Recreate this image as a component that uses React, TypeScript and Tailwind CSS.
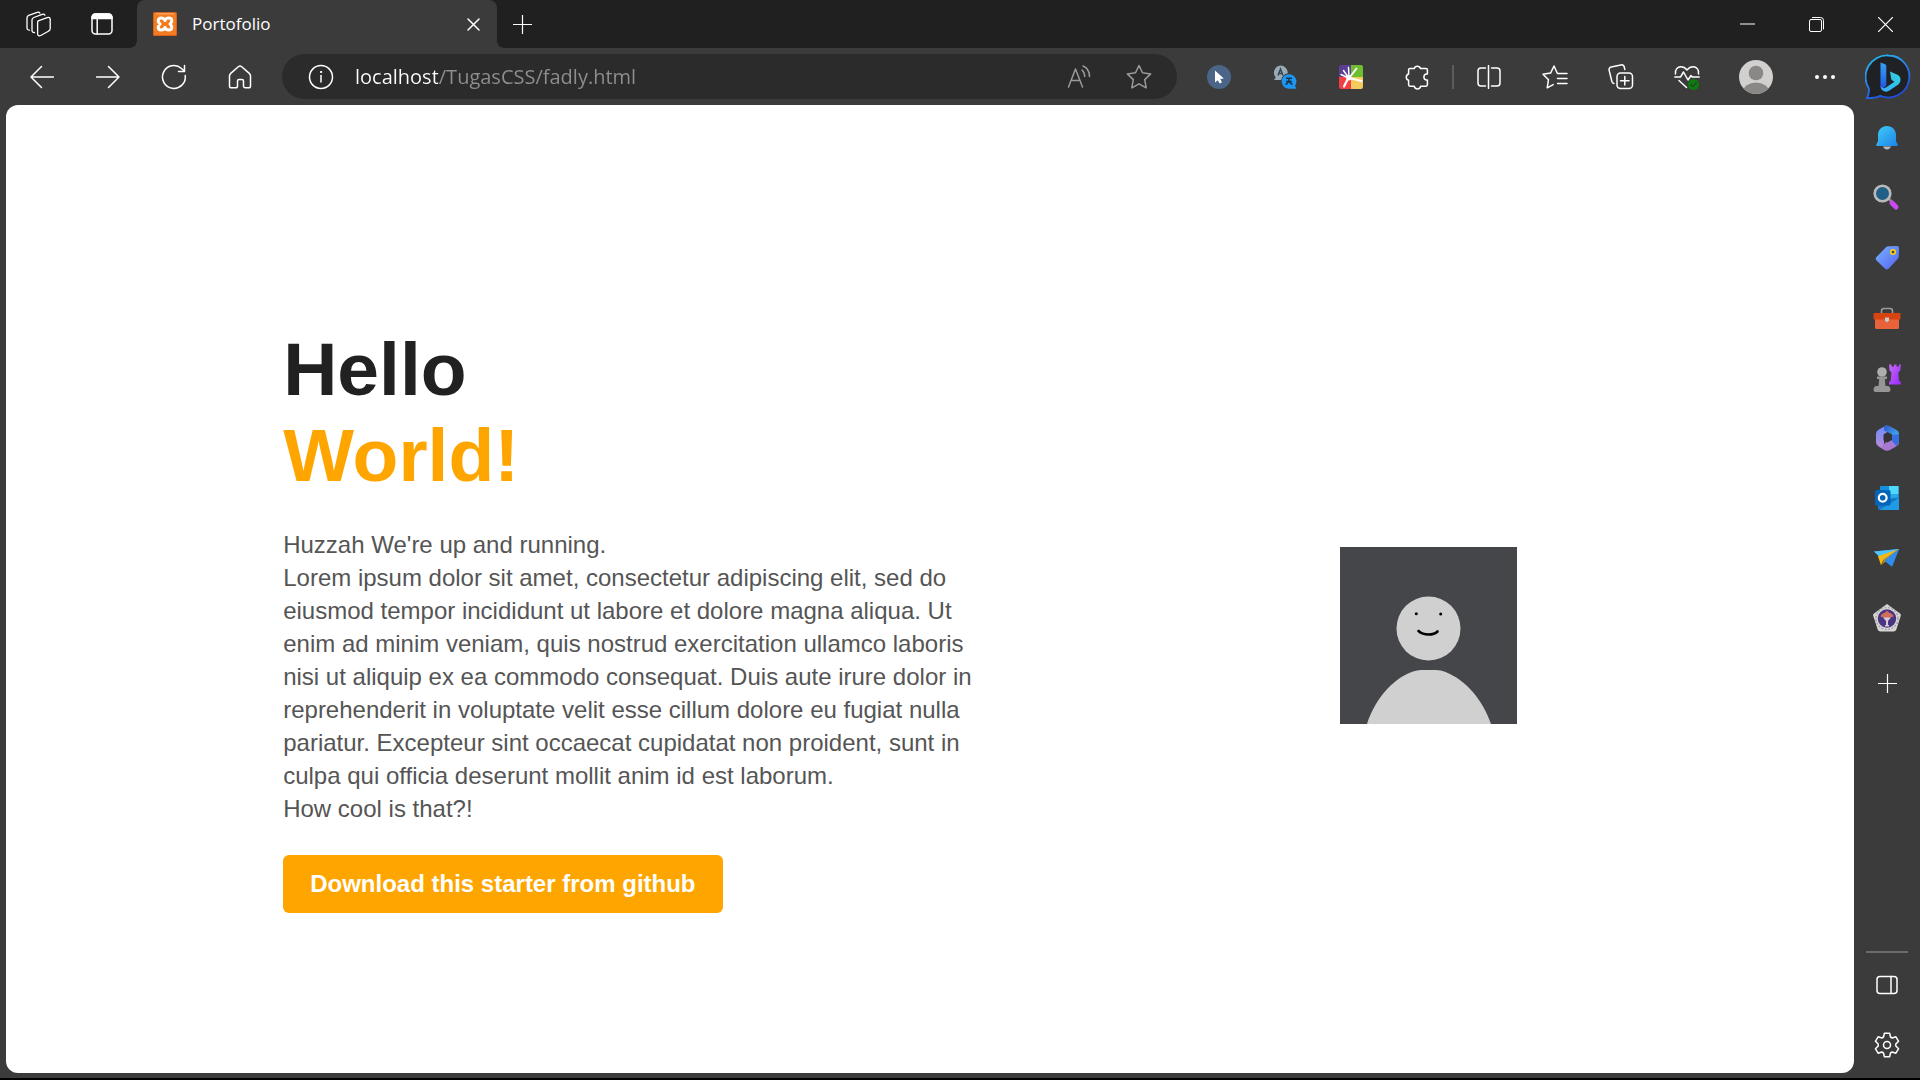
import type { ReactNode } from "react";

const line = {
  fill: "none",
  stroke: "currentColor",
  strokeWidth: 1.5,
  strokeLinecap: "round",
  strokeLinejoin: "round",
} as const;

function IconButton({ label, className, children }: { label: string; className: string; children: ReactNode }) {
  return (
    <button type="button" aria-label={label} className={`flex shrink-0 items-center justify-center ${className}`}>
      {children}
    </button>
  );
}

function Plus() {
  return (
    <svg width="20" height="20" viewBox="0 0 20 20" {...line} strokeWidth={1.2} strokeLinecap="butt">
      <path d="M10.500 1v19M1 10.500h19" />
    </svg>
  );
}

function TitleBar() {
  return (
    <header className="flex h-12 shrink-0 bg-[#202020] text-white">
      <div className="flex pr-1 pl-[7px]">
        <IconButton label="Workspaces" className="w-[63px]">
          <svg width="26" height="26" viewBox="0 0 26 26" {...line} strokeWidth={1.3}>
            <path d="M12.200 9.800l9-3.200c1.800-.6 3 .2 3 1.700v9.200c0 1.300-.6 2.100-1.800 2.700l-7.700 4.300c-1.500.8-3.100.1-3.100-1.500V12c0-1.100.2-1.800.6-2.200z" />
            <path d="M8.500 21.500c-1.500.2-2.500-.6-2.500-2V9c0-1.200.6-2 1.800-2.500l8.400-3.200c1.200-.4 2.200-.1 2.700.8" />
            <path d="M3.500 19.200C2 19.200 1 18.400 1 17V6.900C1 5.700 1.600 4.900 2.700 4.400l8.500-3.100c1.100-.4 2.100-.1 2.600.8" />
          </svg>
        </IconButton>
        <IconButton label="Tab actions menu" className="w-[63px]">
          <svg width="22" height="22" viewBox="0 0 22 22" {...line}>
            <rect x="1" y="1" width="20" height="20" rx="3.500" />
            <path d="M1 5.500v-1A3.500 3.500 0 0 1 4.500 1h13A3.500 3.500 0 0 1 21 4.500v1z" fill="currentColor" />
            <path d="M6.200 6v15" />
          </svg>
        </IconButton>
      </div>
      <div className="relative flex w-[360px] items-center rounded-t-lg bg-[#3b3b3b] pr-3 pl-4">
        <span className="absolute bottom-0 -left-1.5 size-1.5 bg-[radial-gradient(circle_at_0_0,#202020_5px,#3b3b3b_6px)]" />
        <span className="absolute -right-1.5 bottom-0 size-1.5 bg-[radial-gradient(circle_at_100%_0,#202020_5px,#3b3b3b_6px)]" />
        <svg width="24" height="24" viewBox="0 0 24 24">
          <rect width="24" height="24" rx="1.500" fill="#d9621a" />
          <rect x="1" y="1" width="22" height="22" rx="1" fill="#f47c20" />
          <path d="M3 1.800h18" stroke="#f9b27c" strokeWidth="1" />
          <path
            d="M12 8.500C11 5.300 5.200 5 5.200 8.800c0 1.700 1 2.500 1.800 3.200-.8.700-1.800 1.500-1.800 3.200 0 3.800 5.800 3.500 6.800.3 1 3.200 6.800 3.500 6.800-.3 0-1.700-1-2.500-1.800-3.200.8-.7 1.800-1.500 1.800-3.200C18.800 5 13 5.300 12 8.500z"
            fill="none"
            stroke="#fff"
            strokeWidth="3"
            strokeLinejoin="round"
          />
        </svg>
        <h2 className="min-w-0 flex-1 truncate pl-[15px] text-[17px] leading-6">Portofolio</h2>
        <IconButton label="Close tab" className="size-6">
          <svg width="13" height="13" viewBox="0 0 13 13" {...line}>
            <path d="M1 1l11 11M12 1L1 12" />
          </svg>
        </IconButton>
      </div>
      <IconButton label="New tab" className="w-[50px]">
        <Plus />
      </IconButton>
      <div className="ml-auto flex">
        <IconButton label="Minimize" className="w-[69px]">
          <svg width="15" height="15" viewBox="0 0 15 15" {...line} strokeWidth={1} strokeLinecap="butt">
            <path d="M0 7h15" />
          </svg>
        </IconButton>
        <IconButton label="Restore" className="w-[69px]">
          <svg width="15" height="15" viewBox="0 0 15 15" {...line} strokeWidth={1}>
            <rect x=".5" y="2.500" width="12" height="12" rx="1.500" />
            <path d="M3.500.5h8a3 3 0 0 1 3 3v8.500" />
          </svg>
        </IconButton>
        <IconButton label="Close window" className="w-[69px]">
          <svg width="15" height="15" viewBox="0 0 15 15" {...line} strokeWidth={1.2} strokeLinecap="butt">
            <path d="M0 0l15 15M15 0L0 15" />
          </svg>
        </IconButton>
      </div>
    </header>
  );
}

function Toolbar() {
  return (
    <nav aria-label="Browser toolbar" className="flex h-[57px] shrink-0 pr-0.5 pl-[9px] text-white">
      <IconButton label="Back" className="w-[66px]">
        <svg width="24" height="24" viewBox="0 0 24 24" {...line}>
          <path d="M11.500 1.500L1 12l10.500 10.500M1 12h22.500" />
        </svg>
      </IconButton>
      <IconButton label="Forward" className="w-[66px]">
        <svg width="24" height="24" viewBox="0 0 24 24" {...line}>
          <path d="M12.500 1.500L23 12 12.500 22.500M23 12H.5" />
        </svg>
      </IconButton>
      <IconButton label="Refresh" className="w-[66px]">
        <svg width="26" height="26" viewBox="0 0 26 26" {...line}>
          <path d="M24.200 11.500A11.400 11.400 0 1 1 20.500 4.500l2.700 2.500M23.500 1.500v6h-6" />
        </svg>
      </IconButton>
      <IconButton label="Home" className="w-[66px]">
        <svg width="24" height="26" viewBox="0 0 24 26" {...line}>
          <path d="M1.500 12c0-1 .4-1.900 1.200-2.600l7.600-6.700c1-.9 2.400-.9 3.400 0l7.600 6.700c.8.7 1.200 1.600 1.200 2.600v10c0 1-.7 1.800-1.800 1.800h-3.400c-1 0-1.800-.7-1.800-1.800v-5c0-1-.6-1.600-1.600-1.600h-2.800c-1 0-1.600.6-1.600 1.600v5c0 1-.8 1.800-1.800 1.800H3.300c-1.100 0-1.800-.8-1.800-1.800z" />
        </svg>
      </IconButton>

      <div className="mx-[9px] my-1.5 flex min-w-0 flex-1 items-center rounded-full bg-[#2b2b2b] pr-2 pl-[15px]">
        <IconButton label="View site information" className="w-12">
          <svg width="26" height="26" viewBox="0 0 26 26" {...line}>
            <circle cx="13" cy="13" r="11.500" />
            <path d="M13 11.500v6.500" />
            <circle cx="13" cy="8" r=".7" fill="currentColor" strokeWidth="1" />
          </svg>
        </IconButton>
        <input
          aria-label="Address"
          type="text"
          defaultValue="localhost/TugasCSS/fadly.html"
          className="ml-2.5 h-8 min-w-0 flex-1 bg-[linear-gradient(90deg,#fff_83px,#8f8f8f_83px)] bg-clip-text text-xl text-transparent outline-none"
        />
        <div className="flex text-[#9a9a9a]">
          <IconButton label="Read aloud" className="w-[60px]">
            <svg width="24" height="24" viewBox="0 0 24 24" {...line}>
              <path d="M1.500 22L8.500 4l7 18M4 15.500h9" />
              <path d="M15 5c1.700 1.500 2.700 3.700 2.700 6.500M16 1c4.200 1.700 6.500 5.500 6.500 10.500" />
            </svg>
          </IconButton>
          <IconButton label="Add to favorites" className="w-[60px]">
            <svg width="26" height="26" viewBox="0 0 26 26" {...line}>
              <path d="M13 1.500l3.500 7.300 8.200 1.100-6 5.700 1.500 8.200-7.200-4-7.200 4 1.500-8.200-6-5.700 8.200-1.100z" />
            </svg>
          </IconButton>
        </div>
      </div>

      <IconButton label="Pointer extension" className="w-[66px]">
        <svg width="24" height="24" viewBox="0 0 24 24">
          <circle cx="12" cy="12" r="12" fill="#4a6588" />
          <path d="M8 5.500v12l2.700-2.300 2 3.300 2.300-1.300-1.800-3.300 3.600-.5z" fill="#fff" />
        </svg>
      </IconButton>
      <IconButton label="Translate extension" className="w-[66px]">
        <svg width="24" height="24" viewBox="0 0 24 24">
          <path d="M7.500.5a7.300 7.300 0 1 1 0 14.600H1l1.700-2.600A7.300 7.300 0 0 1 7.500.5z" fill="#9aabb8" />
          <path d="M5 10.500l2.500-6.500L10 10.500M6 8.500h3" stroke="#34444f" strokeWidth="1.500" fill="none" />
          <circle cx="16" cy="16.500" r="8.200" fill="#3b3b3b" />
          <path d="M16 9.200a7.300 7.300 0 0 1 6 11.500l1.500 3.100H16a7.300 7.300 0 0 1 0-14.600z" fill="#1c96f3" />
          <path d="M13 13.200h6M12.500 19.500c2.500-1 3.500-3 3.500-6M19.500 19.500c-2.500-1-3.500-3-3.500-6M13 16.500h6" stroke="#17364f" strokeWidth="1.400" fill="none" />
        </svg>
      </IconButton>
      <IconButton label="Media extension" className="w-[66px]">
        <svg width="24" height="24" viewBox="0 0 24 24">
          <path d="M2 0h10v12H0V2a2 2 0 0 1 2-2z" fill="#5b3f93" />
          <path d="M12 0h10a2 2 0 0 1 2 2v10H12z" fill="#6fbe30" />
          <path d="M0 12h12v12H2a2 2 0 0 1-2-2z" fill="#f23f43" />
          <path d="M12 12h12v10a2 2 0 0 1-2 2H12z" fill="#f2cb5c" />
          <g fill="none" stroke="#fff" strokeLinecap="round">
            <path d="M9.500 13L2 9.500M9.500 12.500L4.500 5.500M10 12L9.500 2.500" strokeWidth="1.500" />
            <path d="M10.500 12.500L17.500 3.500M10.500 13l12 3" strokeWidth="1.900" />
            <path d="M9 13.500L5 21.500" strokeWidth="2.200" />
          </g>
          <circle cx="9.800" cy="12.800" r="2.600" fill="#fff" />
        </svg>
      </IconButton>
      <IconButton label="Extensions" className="w-[66px]">
        <svg width="24" height="26" viewBox="0 0 24 26" {...line}>
          <path d="M5 4.500h4.200a3.300 3.300 0 0 1 6.300 0H21c.8 0 1.400.6 1.400 1.400V10h-1.200a3.100 3.100 0 0 0 0 6h1.200v4.800c0 .8-.6 1.400-1.400 1.400h-5.300a3.300 3.300 0 0 1-6.500 0H5c-.8 0-1.400-.6-1.400-1.400V16.300a3.300 3.300 0 0 1 0-6.300V5.900c0-.8.6-1.400 1.400-1.400z" />
        </svg>
      </IconButton>
      <div className="mx-0.5 h-6 w-0.5 self-center bg-[#5c5c5c]" />
      <IconButton label="Split screen" className="w-[66px]">
        <svg width="24" height="24" viewBox="0 0 24 24" {...line}>
          <path d="M8.500 21H4a3 3 0 0 1-3-3V6a3 3 0 0 1 3-3h4.500M14.500 21H20a3 3 0 0 0 3-3V6a3 3 0 0 0-3-3h-5.500M11.500.7v22.600" />
        </svg>
      </IconButton>
      <IconButton label="Favorites" className="w-[66px]">
        <svg width="26" height="26" viewBox="0 0 26 26" {...line}>
          <path d="M17 9.500l-1.700-.3L12 2 8.600 9.100 1 10.200l5.500 5.500-1.300 8.100 6-3.200M15.500 9.500h9.500M15.500 14.500h9.500M15.500 19.500h9.500" />
        </svg>
      </IconButton>
      <IconButton label="Collections" className="w-[66px]">
        <svg width="26" height="26" viewBox="0 0 26 26" {...line}>
          <rect x="9" y="9" width="15.500" height="15.500" rx="3.500" />
          <path d="M16.800 12.500v8.500M12.500 16.800H21" />
          <path d="M5.800 19.500c-1-.3-1.600-1-1.900-2L1.200 6.600c-.5-1.800.4-3.200 2-3.600L12.800.9c1.800-.4 3.200.6 3.500 2.200l.5 2.400" />
        </svg>
      </IconButton>
      <IconButton label="Browser essentials" className="w-[66px]">
        <svg width="26" height="26" viewBox="0 0 26 26" {...line}>
          <path d="M1.500 10C.7 6 3.300 2.800 7 2.800c2.800 0 4.500 1.400 6 3.200 1.500-1.800 3.200-3.200 6-3.200 3.700 0 6.300 3.200 5.500 7.200M.8 13h5.700l3-5 4.500 8 3-4.500 1.200 1.500h7M5 16.500l7.500 7" />
          <circle cx="19.500" cy="20.500" r="5.500" fill="#0f7b0f" stroke="none" />
          <path d="M16.800 20.700l2 1.800 3.500-3.700" stroke="#1d4a1d" />
        </svg>
      </IconButton>
      <IconButton label="Profile" className="w-[72px]">
        <svg width="34" height="34" viewBox="0 0 34 34">
          <clipPath id="avatar">
            <circle cx="17" cy="17" r="17" />
          </clipPath>
          <g clipPath="url(#avatar)">
            <path d="M0 0h34v34H0z" fill="#d2d0ce" />
            <circle cx="17" cy="13" r="7.300" fill="#8a8886" />
            <ellipse cx="17" cy="32" rx="13" ry="9.500" fill="#8a8886" />
          </g>
        </svg>
      </IconButton>
      <IconButton label="Settings and more" className="w-[66px]">
        <svg width="20" height="4" viewBox="0 0 20 4" fill="currentColor">
          <circle cx="2" cy="2" r="2" />
          <circle cx="10" cy="2" r="2" />
          <circle cx="18" cy="2" r="2" />
        </svg>
      </IconButton>
      <IconButton label="Bing Chat" className="w-[60px]">
        <svg width="46" height="46" viewBox="0 0 46 46">
          <defs>
            <linearGradient id="ring" x1="0" y1="0" x2="0.500" y2="1">
              <stop offset="0" stopColor="#22c4f4" />
              <stop offset=".5" stopColor="#2a86ee" />
              <stop offset="1" stopColor="#1f4fe0" />
            </linearGradient>
            <linearGradient id="stem" x1="0" y1="0" x2="0" y2="1">
              <stop offset="0" stopColor="#3aa0f5" />
              <stop offset="1" stopColor="#1a56e8" />
            </linearGradient>
            <linearGradient id="bowl" x1="1" y1="0" x2="0" y2="1">
              <stop offset="0" stopColor="#2fd4d8" />
              <stop offset="1" stopColor="#36a8ff" />
            </linearGradient>
          </defs>
          <path d="M23.500 1.500a21 21 0 1 1-8.200 40.400c-3.300 1.800-8.300 2.300-13.300 2.300 1.600-3.200 2.200-6 2-9.500A21.500 21.500 0 0 1 23.500 1.500z" fill="#1f2125" stroke="url(#ring)" strokeWidth="1.800" />
          <path d="M15.500 8.500l4.600 1.700a2 2 0 0 1 1.200 1.800v19.500L17 35c-.9-.7-1.500-1.700-1.500-3z" fill="url(#stem)" />
          <path d="M25 17.500l7 3c2.500 1 3.700 3.200 3.500 5.500-.2 2.500-1.300 4-3.300 5.200l-8.200 5.500c-2 1.300-4.600 1.300-6.300-.1-1.200-.9-1.900-2.200-2.200-4.500 1.400 2.400 3.500 2.600 5.400 1.400l8.600-5.800-2-1.200a3 3 0 0 1-1.300-1.600z" fill="url(#bowl)" />
        </svg>
      </IconButton>
    </nav>
  );
}

const apps: { label: string; art: ReactNode }[] = [
  {
    label: "Notifications",
    art: (
      <>
        <defs>
          <linearGradient id="bell" x1="0" y1="0" x2="1" y2="1">
            <stop offset="0" stopColor="#41cdf8" />
            <stop offset="1" stopColor="#1c83e6" />
          </linearGradient>
        </defs>
        <path d="M11 23.500h8c-.8 2-2.200 3-4 3s-3.200-1-4-3z" fill="#b8bcc0" />
        <path d="M15 3c5 0 9 3.800 9 9v6l1.700 3.500c.3.800-.1 1.500-.9 1.500H5.200c-.8 0-1.200-.7-.9-1.500L6 18v-6c0-5.200 4-9 9-9z" fill="url(#bell)" />
      </>
    ),
  },
  {
    label: "Search",
    art: (
      <>
        <path d="M17 16l3.500 3.500" stroke="#8d8d8d" strokeWidth="2.500" />
        <circle cx="10.500" cy="10.500" r="7.800" fill="#215f86" stroke="#b9b9b9" strokeWidth="2.600" />
        <path d="M20 20l4 4" stroke="#c94bf0" strokeWidth="5" strokeLinecap="round" />
      </>
    ),
  },
  {
    label: "Shopping",
    art: (
      <>
        <defs>
          <linearGradient id="tag" x1="0" y1="0" x2="1" y2="1">
            <stop offset="0" stopColor="#79b5ff" />
            <stop offset="1" stopColor="#5560f0" />
          </linearGradient>
        </defs>
        <path d="M17 3.200L25 3a2 2 0 0 1 2 2l-.2 8.500c0 1-.4 1.800-1.100 2.500l-9.200 9.800c-1 1-2.400 1-3.400 0l-8.600-8.300c-1-1-1-2.400 0-3.400l9.700-10c.8-.7 1.700-.9 2.800-.9z" fill="url(#tag)" />
        <circle cx="21" cy="9" r="2.200" fill="#3a3d62" stroke="#f7d20a" strokeWidth="1.700" />
      </>
    ),
  },
  {
    label: "Tools",
    art: (
      <>
        <path d="M9.500 10V8c0-1.700 1-2.500 2.500-2.500h6c1.500 0 2.500.8 2.500 2.500v2" fill="none" stroke="#9a9a9a" strokeWidth="1.600" />
        <rect x="3" y="14" width="24" height="12" rx="1.500" fill="#e8623a" />
        <rect x="1.500" y="10" width="27" height="6.500" rx="1" fill="#d8440f" />
        <path d="M13 14.500h4v3l-2 2-2-2z" fill="#c8ccd0" />
      </>
    ),
  },
  {
    label: "Games",
    art: (
      <>
        <defs>
          <linearGradient id="rook" x1="0" y1="0" x2="1" y2="1">
            <stop offset="0" stopColor="#c468f2" />
            <stop offset="1" stopColor="#982bff" />
          </linearGradient>
        </defs>
        <path d="M17 1.500h2.500v2H22v-2h2.500v2H27v-2h2l-.8 6.200-1.900 1.500.6 8 2 2.300V21.500H17v-2l1.800-2.300.6-8-1.900-1.500z" fill="url(#rook)" />
        <circle cx="10" cy="9" r="4.800" fill="#adadad" />
        <path d="M5 13.500h10v2.500h-2.200l.7 7h3c1 .8 2 2 2 3.500 0 1.400-.7 2.500-2 2.500h-13c-1.300 0-2-1.100-2-2.500 0-1.500 1-2.700 2-3.500h3l.7-7H5z" fill="#969696" />
      </>
    ),
  },
  {
    label: "Microsoft 365",
    art: (
      <>
        <defs>
          <linearGradient id="m1" x1="0" y1="0" x2="0" y2="1">
            <stop offset="0" stopColor="#6b8dff" />
            <stop offset="1" stopColor="#b58ad6" />
          </linearGradient>
          <linearGradient id="m2" x1="0" y1="0" x2="1" y2="1">
            <stop offset="0" stopColor="#3056c9" />
            <stop offset="1" stopColor="#46c9f7" />
          </linearGradient>
        </defs>
        <path d="M15 2l-8.500 4.700A5 5 0 0 0 4 11v8c0 1.800 1 3.400 2.500 4.300l1 .6c2.500 1.200 4.500-.5 4.500-3v-9.500L17 8z" fill="url(#m1)" />
        <path d="M12 3.200c1.700-1 4-1 6 0l6.500 3.700A4.500 4.500 0 0 1 27 11v8L20 15v-3.500L12 7.500z" fill="url(#m2)" />
        <path d="M7 23.700c2.800 1 5-.2 5-2.700l8-6h7v4c0 1.800-.8 3.200-2.500 4.200L18 27c-2 1-4 1-6 0z" fill="#a779d0" />
        <path d="M20 12l7-1v8l-2.500 4-4.500-5z" fill="#356fe0" />
        <path d="M11.500 11.500l4-2.300 4.500 2.600v5.200l-4.500 2.600-4-2.400z" fill="#343438" />
      </>
    ),
  },
  {
    label: "Outlook",
    art: (
      <>
        <rect x="8" y="3" width="18.500" height="15" rx="1" fill="#1490df" />
        <path d="M17 3h9.500v8H17z" fill="#50d9ff" />
        <path d="M17 11h9.500v6H17z" fill="#28a8ea" />
        <path d="M6 26.500V17l21-2.500v12z" fill="#1477c7" />
        <path d="M7 27l20-12v11a1 1 0 0 1-1 1z" fill="#1f9be6" />
        <rect x="3" y="7" width="15.500" height="15.500" rx="1.500" fill="#0364b8" />
        <circle cx="10.700" cy="14.700" r="3.900" fill="none" stroke="#fff" strokeWidth="2.200" />
      </>
    ),
  },
  {
    label: "Drop",
    art: (
      <>
        <path d="M2 8.500L27 6l-7 17.500-7.500-5.500z" fill="#2f8cf0" />
        <path d="M2 8.500L27 6 7.500 14z" fill="#4fc3fb" />
        <path d="M27 6L6 13.200l3 9 2.500-5.700z" fill="#f5b90f" />
        <path d="M12 16.500L27 6 9.500 22z" fill="#c98a10" />
        <path d="M12.500 17.500L27 6l-7 17.500z" fill="#2f8cf0" />
      </>
    ),
  },
  {
    label: "Campus site",
    art: (
      <>
        <path d="M15 1l13 9.500c.8.600 1 1.500.7 2.400L24.500 26c-.4 1.500-1.500 2.500-3 2.500h-13c-1.500 0-2.600-1-3-2.500L1.300 12.900c-.3-.9-.1-1.800.7-2.400z" fill="#d9d6d6" />
        <circle cx="15" cy="15.500" r="11" fill="none" stroke="#a9a5a9" strokeWidth="1.600" strokeDasharray="2 1.500" />
        <circle cx="15" cy="15.500" r="9.200" fill="#4a3580" />
        <path d="M8.500 13.500c1-4 4.500-2.500 6.500-6 2 3.500 5.500 2 6.500 6L17 15h-4z" fill="#d0705a" />
        <path d="M11 14.500h8L16 18v4h1v1.500h-4V22h1v-4z" fill="#dcc8dc" />
      </>
    ),
  },
];

function Sidebar() {
  return (
    <aside aria-label="Sidebar" className="flex w-[66px] shrink-0 flex-col items-center pt-[3px] pb-[3px] text-white">
      {apps.map((app) => (
        <IconButton key={app.label} label={app.label} className="h-[60px] w-full">
          <svg width="30" height="30" viewBox="0 0 30 30">
            {app.art}
          </svg>
        </IconButton>
      ))}
      <IconButton label="Customize sidebar" className="h-[70px] w-full">
        <Plus />
      </IconButton>
      <div className="mt-auto h-0.5 w-[42px] bg-[#6b6b6b]" />
      <IconButton label="Hide sidebar" className="mt-0.5 h-[60px] w-full">
        <svg width="22" height="20" viewBox="0 0 22 20" {...line}>
          <rect x="1" y="1.500" width="20" height="17" rx="3" />
          <path d="M15 1.500v17" />
        </svg>
      </IconButton>
      <IconButton label="Settings" className="h-[60px] w-full">
        <svg width="26" height="26" viewBox="0 0 26 26" {...line}>
          <circle cx="13" cy="13" r="3.500" />
          <path d="M10.400 1.200h5.200l.9 3.800 1.700 1 3.700-1.200 2.700 4.500-2.800 2.700v2l2.800 2.700-2.700 4.500-3.700-1.200-1.700 1-.9 3.800h-5.200L9.500 21l-1.700-1-3.700 1.200-2.700-4.500L4.200 14v-2L1.400 9.300l2.700-4.500L7.800 6l1.700-1z" />
        </svg>
      </IconButton>
    </aside>
  );
}

function Portrait() {
  return (
    <svg role="img" aria-label="Smiling person" width="177" height="177" viewBox="0 0 177 177">
      <path d="M0 0h177v177H0z" fill="#45464a" />
      <circle cx="88.500" cy="81.500" r="32" fill="#d0d0d0" />
      <path d="M27 177C36 149 56 130 73 124.500q4-1.500 8-1.500h15q5 0 9 1.700C126 133 143 153 151 177z" fill="#d0d0d0" />
      <circle cx="76.300" cy="66.800" r="1.500" />
      <circle cx="100.700" cy="67" r="1.500" />
      <path d="M78.500 84q4 3.500 10 3.500t9-3" fill="none" stroke="#000" strokeWidth="2.600" strokeLinecap="round" />
    </svg>
  );
}

function Page() {
  return (
    <main className="flex min-w-0 flex-1 items-center rounded-xl bg-white px-[15%] pt-[93px] font-['Liberation_Sans',Arial,sans-serif]">
      <section className="min-w-0 flex-1 pb-8">
        <h1 className="text-[75px] leading-[86px] font-bold text-[#212121]">
          Hello
          <span className="block text-[#ffa500]">World!</span>
        </h1>
        <p className="mt-[30px] max-w-[702px] text-2xl leading-[33px] text-[#555]">
          Huzzah We're up and running.
          <br />
          Lorem ipsum dolor sit amet, consectetur adipiscing elit, sed do eiusmod tempor incididunt ut labore et dolore
          magna aliqua. Ut enim ad minim veniam, quis nostrud exercitation ullamco laboris nisi ut aliquip ex ea commodo
          consequat. Duis aute irure dolor in reprehenderit in voluptate velit esse cillum dolore eu fugiat nulla
          pariatur. Excepteur sint occaecat cupidatat non proident, sunt in culpa qui officia deserunt mollit anim id est
          laborum.
          <br />
          How cool is that?!
        </p>
        <a
          href="#download"
          className="mt-[30px] inline-block rounded-md bg-[#ffa500] px-[27px] py-[15px] text-2xl leading-7 font-bold text-white"
        >
          Download this starter from github
        </a>
      </section>
      <figure className="flex w-[23%] shrink-0 justify-center">
        <Portrait />
      </figure>
    </main>
  );
}

export default function App() {
  return (
    <div className="flex min-h-screen flex-col border-b-2 border-black bg-[#3b3b3b] font-['Open_Sans','Noto_Sans',sans-serif]">
      <TitleBar />
      <Toolbar />
      <div className="flex flex-1">
        <div className="flex min-w-0 flex-1 pb-[5px] pl-1.5">
          <Page />
        </div>
        <Sidebar />
      </div>
    </div>
  );
}
